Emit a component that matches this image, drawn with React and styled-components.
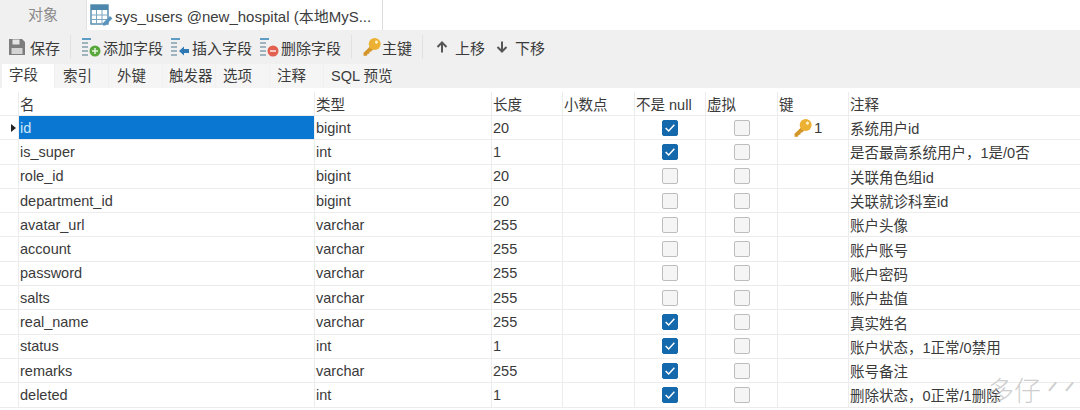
import React from "react";
import styled, { createGlobalStyle } from "styled-components";

const GlobalStyle = createGlobalStyle`
  html, body { margin: 0; padding: 0; background: #fff; }
  body { font-family: "Liberation Sans", "Noto Sans CJK SC", sans-serif; color: #333; overflow: hidden; }
`;

const Page = styled.div`
  position: relative;
  width: 1080px;
  height: 410px;
  overflow: hidden;
  background: #fff;
`;

const TabBar = styled.div`
  display: flex;
  height: 30px;
  background: #fff;
`;
const ObjectTab = styled.div`
  width: 86px;
  background: #f0f0f0;
  color: #8a8a8a;
  font-size: 15px;
  line-height: 30px;
  text-align: center;
  border-right: 1px solid #e2e2e2;
`;
const TableTab = styled.div`
  width: 296px;
  display: flex;
  align-items: center;
  gap: 1px;
  padding-left: 3px;
  box-sizing: border-box;
  border-right: 1px solid #dcdcdc;
  font-size: 15px;
  color: #3c3c3c;
  white-space: nowrap;
`;

const Toolbar = styled.div`
  display: flex;
  align-items: center;
  height: 34px;
  background: #f0f0f0;
  padding-left: 8px;
  font-size: 15px;
  color: #3a3a3a;
`;
const ToolButton = styled.div`
  display: flex;
  align-items: center;
  gap: ${(p) => p.$gap ?? 2}px;
  margin-right: ${(p) => p.$right ?? 0}px;
  white-space: nowrap;
`;
const ToolSep = styled.div`
  width: 1px;
  height: 24px;
  background: #e2e2e2;
  margin: 0 ${(p) => p.$right ?? 10}px 0 ${(p) => p.$left ?? 10}px;
`;

const SubTabs = styled.div`
  display: flex;
  height: 24px;
  background: #f0f0f0;
  padding-left: 2px;
`;
const SubTab = styled.div`
  width: ${(p) => p.$w}px;
  padding-left: ${(p) => p.$pad ?? 8}px;
  box-sizing: border-box;
  background: ${(p) => (p.$active ? "#fff" : "#f5f5f5")};
  font-size: 14.5px;
  line-height: ${(p) => (p.$active ? 22 : 25)}px;
  color: #3c3c3c;
  white-space: nowrap;
  margin-right: 1px;
`;

const Grid = styled.div`
  background: #fff;
  padding-top: 4px;
`;
const Row = styled.div`
  display: grid;
  grid-template-columns: 18px 296px 177px 71px 72px 71px 72px 71px 1fr;
  height: ${(p) => (p.$head ? "24px" : "24.3px")};
  box-sizing: border-box;
  border-bottom: 1px solid #ececec;
`;
const Cell = styled.div`
  display: flex;
  align-items: center;
  justify-content: ${(p) => (p.$center ? "center" : "flex-start")};
  padding-left: ${(p) => (p.$center ? 0 : 1)}px;
  border-left: 1px solid ${(p) => (p.$plain ? "transparent" : "#ececec")};
  background: ${(p) => (p.$selected ? "#0a78d2" : "transparent")};
  color: ${(p) => (p.$selected ? "#cfe6f8" : "#3a3a3a")};
  font-size: 14.5px;
  white-space: nowrap;
  overflow: hidden;
  min-width: 0;
`;
const Marker = styled.div`
  width: 0;
  height: 0;
  margin-left: 9px;
  border-left: 5px solid #222;
  border-top: 4px solid transparent;
  border-bottom: 4px solid transparent;
`;
const Check = styled.div`
  width: 16px;
  height: 16px;
  box-sizing: border-box;
  border-radius: 2px;
  display: flex;
  align-items: center;
  justify-content: center;
  background: ${(p) => (p.$on ? "#1469ad" : "#f5f5f5")};
  border: 1px solid ${(p) => (p.$on ? "#1469ad" : "#bdbdbd")};
`;
const KeyCell = styled.div`
  display: flex;
  align-items: center;
  gap: 1px;
  margin-left: 14px;
  font-size: 15px;
`;
const Watermark = styled.div`
  position: absolute;
  right: 5px;
  bottom: 2px;
  display: flex;
  align-items: center;
  gap: 6px;
  font-family: "Noto Sans CJK SC", sans-serif;
  font-size: 27px;
  font-weight: 300;
  line-height: 36px;
  color: rgba(185, 185, 185, 0.7);
`;

const SaveIcon = () => (
  <svg width="18" height="18" viewBox="0 0 18 18">
    <path d="M1 1h13l3 3v13H1z" fill="#7d7d7d" />
    <rect x="4.5" y="1.5" width="7" height="5" fill="#e4e4e4" />
    <rect x="3.5" y="10" width="11" height="6" fill="#d4d4d4" />
  </svg>
);

const FieldIcon = ({ children }) => (
  <svg width="20" height="20" viewBox="0 0 20 20">
    <rect x="1" y="1" width="9" height="2" fill="#5d9cc4" />
    <rect x="1" y="5" width="6" height="2" fill="#9eb3bd" />
    <rect x="1" y="9" width="6" height="2" fill="#9eb3bd" />
    <rect x="1" y="13" width="6" height="2" fill="#9eb3bd" />
    <rect x="1" y="17" width="6" height="2" fill="#9eb3bd" />
    {children}
  </svg>
);

const AddIcon = () => (
  <FieldIcon>
    <circle cx="14" cy="14" r="5.5" fill="#5aa83c" />
    <path d="M11 14h6M14 11v6" stroke="#e8f5e0" strokeWidth="1.5" />
  </FieldIcon>
);
const InsertIcon = () => (
  <FieldIcon>
    <path d="M9 14l5-4.5V12h5v4h-5v2.5z" fill="#2e78b4" />
  </FieldIcon>
);
const DeleteIcon = () => (
  <FieldIcon>
    <circle cx="14" cy="14" r="5.5" fill="#e2604f" />
    <path d="M11 14h6" stroke="#fbe3df" strokeWidth="1.6" />
  </FieldIcon>
);

const KeyIcon = ({ size = 20 }) => (
  <svg width={size} height={size} viewBox="0 0 18 18">
    <path
      d="M7.2 8.6 1.4 14.2v2.6h3l.6-1.6 1.6-.4.4-1.6 1.6-.4 1.7-1.9z"
      fill="#d3962a"
    />
    <circle cx="11.4" cy="6.2" r="5.4" fill="#ecb132" />
    <circle cx="13" cy="4.6" r="1.4" fill="#fff2c8" />
  </svg>
);

const ArrowUp = () => (
  <svg width="14" height="14" viewBox="0 0 14 14">
    <path d="M7 12.5V2.5M2.5 7 7 2.5 11.5 7" fill="none" stroke="#555" strokeWidth="2" />
  </svg>
);
const ArrowDown = () => (
  <svg width="14" height="14" viewBox="0 0 14 14">
    <path d="M7 1.5v10M2.5 7 7 11.5 11.5 7" fill="none" stroke="#555" strokeWidth="2" />
  </svg>
);

const TableIcon = () => (
  <svg width="24" height="24" viewBox="0 0 24 24">
    <rect x="1" y="2" width="17" height="19" fill="#fff" stroke="#4d87ab" strokeWidth="1.4" />
    <rect x="1" y="2" width="17" height="5" fill="#4d87ab" />
    <path d="M1 12h17M1 16.5h17M6.5 7v14M12 7v14" stroke="#7ba6c0" strokeWidth="1" />
    <path d="M13 20l7-7 2.4 2.4-7 7H13z" fill="#5a94bd" />
  </svg>
);

const CheckMark = () => (
  <svg width="12" height="12" viewBox="0 0 11 11">
    <path d="M1.5 5.5 4.3 8.3 9.5 2.5" fill="none" stroke="#fff" strokeWidth="1.3" />
  </svg>
);

const tabs = [
  { label: "字段", w: 52, pad: 7, active: true },
  { label: "索引", w: 53, pad: 8 },
  { label: "外键", w: 53, pad: 8 },
  { label: "触发器", w: 52, pad: 6 },
  { label: "选项", w: 53, pad: 7 },
  { label: "注释", w: 53, pad: 7 },
  { label: "SQL 预览", w: 66, pad: 7 },
];

const heads = ["名", "类型", "长度", "小数点", "不是 null", "虚拟", "键", "注释"];

const rows = [
  ["id", "bigint", "20", true, "系统用户id", true],
  ["is_super", "int", "1", true, "是否最高系统用户，1是/0否"],
  ["role_id", "bigint", "20", false, "关联角色组id"],
  ["department_id", "bigint", "20", false, "关联就诊科室id"],
  ["avatar_url", "varchar", "255", false, "账户头像"],
  ["account", "varchar", "255", false, "账户账号"],
  ["password", "varchar", "255", false, "账户密码"],
  ["salts", "varchar", "255", false, "账户盐值"],
  ["real_name", "varchar", "255", true, "真实姓名"],
  ["status", "int", "1", true, "账户状态，1正常/0禁用"],
  ["remarks", "varchar", "255", true, "账号备注"],
  ["deleted", "int", "1", true, "删除状态，0正常/1删除"],
];

export default function App() {
  return (
    <Page>
      <GlobalStyle />
      <TabBar>
        <ObjectTab>对象</ObjectTab>
        <TableTab>
          <TableIcon />
          <span>sys_users @new_hospital (本地MyS...</span>
        </TableTab>
      </TabBar>
      <Toolbar>
        <ToolButton $gap={4}><SaveIcon />保存</ToolButton>
        <ToolSep $left={10} $right={10} />
        <ToolButton $right={7}><AddIcon />添加字段</ToolButton>
        <ToolButton $right={7}><InsertIcon />插入字段</ToolButton>
        <ToolButton><DeleteIcon />删除字段</ToolButton>
        <ToolSep $left={10} $right={10} />
        <ToolButton $gap={0}><KeyIcon />主键</ToolButton>
        <ToolSep $left={10} $right={12} />
        <ToolButton $gap={6} $right={10}><ArrowUp />上移</ToolButton>
        <ToolButton $gap={6}><ArrowDown />下移</ToolButton>
      </Toolbar>
      <SubTabs>
        {tabs.map((t) => (
          <SubTab key={t.label} $w={t.w} $pad={t.pad} $active={t.active}>
            {t.label}
          </SubTab>
        ))}
      </SubTabs>
      <Grid>
        <Row $head>
          <Cell $plain />
          {heads.map((h) => (
            <Cell key={h}>{h}</Cell>
          ))}
        </Row>
        {rows.map(([name, type, len, notNull, note, primary], i) => (
          <Row key={name}>
            <Cell $plain>{i === 0 && <Marker />}</Cell>
            <Cell $selected={i === 0}>{name}</Cell>
            <Cell>{type}</Cell>
            <Cell>{len}</Cell>
            <Cell />
            <Cell $center>
              <Check $on={notNull}>{notNull && <CheckMark />}</Check>
            </Cell>
            <Cell $center>
              <Check />
            </Cell>
            <Cell>
              {primary && (
                <KeyCell>
                  <KeyIcon />1
                </KeyCell>
              )}
            </Cell>
            <Cell>{note}</Cell>
          </Row>
        ))}
      </Grid>
      <Watermark>
        <span>多仔</span>
        <span>ᐟ ᐟ</span>
      </Watermark>
    </Page>
  );
}
